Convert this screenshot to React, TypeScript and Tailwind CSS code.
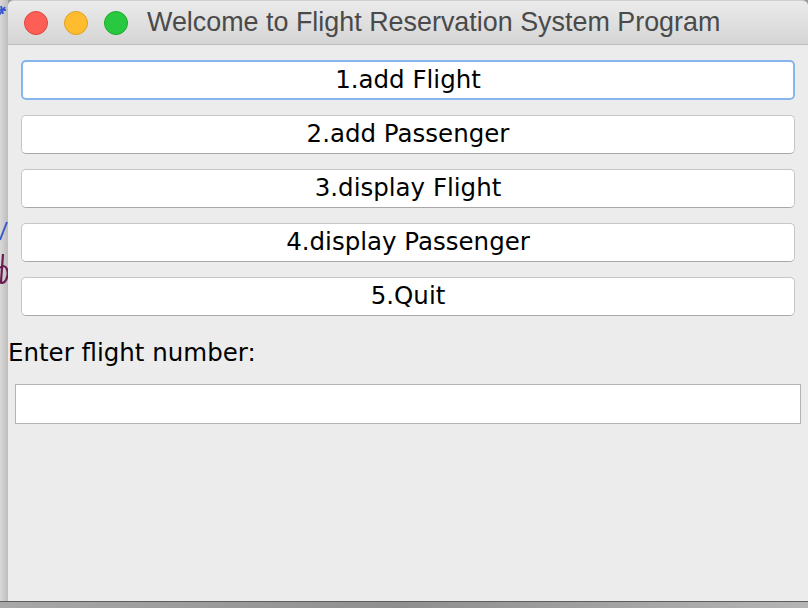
import React, { useState } from 'react';

const menuItems = ['1.add Flight', '2.add Passenger', '3.display Flight', '4.display Passenger', '5.Quit'];

const App: React.FC = () => {
  const [flightNo, setFlightNo] = useState('');

  return (
    <div className="w-[808px] h-[608px] flex flex-col bg-[#9a9a9a] overflow-hidden">
      <div className="flex flex-1 min-h-0">
        {/* bits of the desktop peeking out on the left */}
        <div className="w-[8px] bg-gradient-to-r from-[#d9d9d9] to-[#bdbdbd] overflow-hidden">
          <svg width="8" height="300" viewBox="0 0 8 300">
            <path d="M1 6 L3 14 M-2 10 L6 10 M-1 15 L5 7" stroke="#3a5bd0" strokeWidth="2" fill="none" />
            <path d="M0 240 L7 222" stroke="#3a5bd0" strokeWidth="2" fill="none" />
            <path d="M3 254 L1 282 M0 268 C6 262 10 272 6 280 C4 284 1 283 0 282" stroke="#6b1b4f" strokeWidth="2.2" fill="none" />
          </svg>
        </div>

        {/* window */}
        <div className="flex-1 flex flex-col bg-[#ececec] rounded-t-[6px] overflow-hidden border-t border-[#cfcfcf]">
          {/* title bar */}
          <div className="h-[44px] flex items-center px-[16px] bg-gradient-to-b from-[#ebebeb] to-[#d5d5d5] border-b border-[#bdbdbd]">
            <div className="flex gap-[16px]">
              <span className="w-[24px] h-[24px] rounded-full bg-[#fd5f57] border border-[#e0443e]" />
              <span className="w-[24px] h-[24px] rounded-full bg-[#febc2e] border border-[#dea123]" />
              <span className="w-[24px] h-[24px] rounded-full bg-[#28c840] border border-[#1aab29]" />
            </div>
            <span className="ml-[19px] text-[26.9px] text-[#4a4a4a] font-['Liberation_Sans',sans-serif] leading-none">
              Welcome to Flight Reservation System Program
            </span>
          </div>

          {/* body */}
          <div className="flex flex-col pt-[15px] font-['DejaVu_Sans',sans-serif]">
            <div className="flex flex-col gap-[15px] px-[13px]">
              {menuItems.map((item, i) => (
                <button
                  key={item}
                  className={
                    i === 0
                      ? 'h-[40px] rounded-[5px] bg-white border-2 border-[#86b6ee] text-[24.5px] leading-none text-black'
                      : 'h-[39px] rounded-[5px] bg-white border border-[#c6c6c6] border-b-[#a9a9a9] text-[24.5px] leading-none text-black'
                  }
                >
                  {item}
                </button>
              ))}
            </div>

            <div className="mt-[22px] text-[24.5px] text-black leading-[30px]">Enter flight number:</div>

            <div className="px-[7px] mt-[16px]">
              <input
                value={flightNo}
                onChange={(e) => setFlightNo(e.target.value)}
                className="w-full h-[40px] bg-white border border-[#b3b3b3] px-2 text-[20px] outline-none"
              />
            </div>
          </div>
        </div>
      </div>
      {/* shadow below the window */}
      <div className="h-[7px] bg-gradient-to-r from-[#a8a8a8] via-[#8f8f8f] to-[#b5b5b5] border-t border-[#5d5d5d]" />
    </div>
  );
};

export default App;
